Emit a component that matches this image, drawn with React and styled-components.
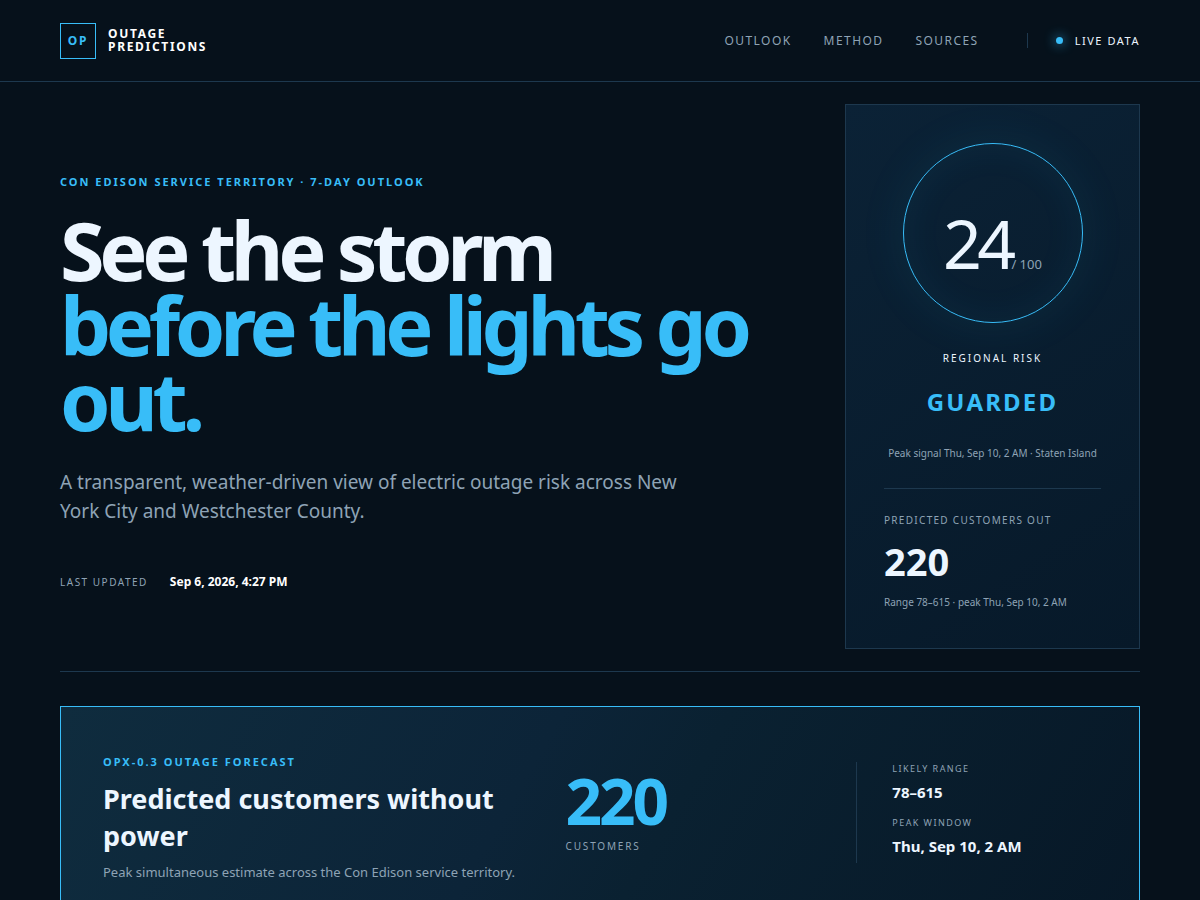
import React from "react";
import styled, { createGlobalStyle, ThemeProvider } from "styled-components";

const theme = {
  ink: "#edf6ff",
  white: "#ffffff",
  accent: "#38bdf8",
  muted: "#8ea3b5",
  line: "#1d384e",
  bg: "#06111b",
};

const GlobalStyle = createGlobalStyle`
  *, *::before, *::after { box-sizing: border-box; }
  body {
    margin: 0;
    background: ${theme.bg};
    color: ${theme.ink};
    font-family: "Noto Sans", "Liberation Sans", sans-serif;
    font-size: 16px;
    line-height: 24px;
  }
  h1, h2, p, dl, dd { margin: 0; }
  a { color: inherit; text-decoration: none; }
`;

const Header = styled.header`
  display: flex;
  align-items: center;
  justify-content: space-between;
  height: 82px;
  padding: 0 60px;
  border-bottom: 1px solid ${({ theme }) => theme.line};
`;

const Brand = styled.a`
  display: flex;
  align-items: center;
  gap: 12px;
  font-size: 12px;
  font-weight: 700;
  line-height: 13px;
  letter-spacing: 0.14em;
`;

const BrandMark = styled.span`
  display: grid;
  place-items: center;
  width: 36px;
  height: 36px;
  border: 1px solid ${({ theme }) => theme.accent};
  color: ${({ theme }) => theme.accent};
`;

const BrandName = styled.span`
  display: grid;
  padding-bottom: 2px;
  color: ${({ theme }) => theme.white};
`;

const Nav = styled.nav`
  display: flex;
  align-items: center;
  gap: 32px;
`;

const NavLink = styled.a`
  color: ${({ theme }) => theme.muted};
  font-size: 12px;
  letter-spacing: 0.12em;
`;

const LiveStatus = styled.span`
  display: flex;
  align-items: center;
  gap: 12px;
  margin-left: 16px;
  padding-left: 28px;
  border-left: 1px solid ${({ theme }) => theme.line};
  color: ${({ theme }) => theme.ink};
  font-size: 11px;
  line-height: 15px;
  letter-spacing: 0.14em;
`;

const LiveDot = styled.i`
  width: 7px;
  height: 7px;
  border-radius: 50%;
  background: ${({ theme }) => theme.accent};
  box-shadow: 0 0 12px ${({ theme }) => theme.accent};
`;

const Main = styled.main`
  padding: 0 60px 60px;
`;

const Hero = styled.section`
  display: grid;
  grid-template-columns: minmax(0, 1fr) 295px;
  gap: 80px;
  align-items: center;
  padding: 22px 0;
  border-bottom: 1px solid ${({ theme }) => theme.line};
`;

const HeroCopy = styled.div`
  padding-top: 15px;
`;

const Eyebrow = styled.p`
  color: ${({ theme }) => theme.accent};
  font-size: 11px;
  font-weight: 700;
  line-height: 16px;
  letter-spacing: 2px;
`;

const Headline = styled.h1`
  margin-top: 22px;
  font-size: 81px;
  font-weight: 700;
  line-height: 75px;
  letter-spacing: -0.066em;
`;

const HeadlineAccent = styled.span`
  display: block;
  color: ${({ theme }) => theme.accent};
`;

const Lede = styled.p`
  max-width: 640px;
  margin-top: 31px;
  color: ${({ theme }) => theme.muted};
  font-size: 19px;
  line-height: 29px;
`;

const Updated = styled.p`
  display: flex;
  align-items: center;
  gap: 22px;
  margin-top: 44px;
`;

const Label = styled.span`
  color: ${({ theme, $bright }) => ($bright ? theme.ink : theme.muted)};
  font-size: 10px;
  line-height: 14px;
  letter-spacing: ${({ $tracking = "0.15em" }) => $tracking};
`;

const UpdatedTime = styled.time`
  color: ${({ theme }) => theme.white};
  font-size: 12px;
  font-weight: 700;
`;

const RiskPanel = styled.aside`
  display: flex;
  flex-direction: column;
  align-items: center;
  padding: 38px;
  border: 1px solid ${({ theme }) => theme.line};
  background: linear-gradient(145deg, #0b2236, #071929);
`;

const RiskRing = styled.div`
  display: flex;
  align-items: baseline;
  justify-content: center;
  width: 180px;
  height: 180px;
  padding-top: 61px;
  border: 1px solid ${({ theme }) => theme.accent};
  border-radius: 50%;
  box-shadow:
    0 0 50px rgba(56, 189, 248, 0.08),
    inset 0 0 40px rgba(56, 189, 248, 0.06);
`;

const RiskScore = styled.span`
  font-size: 68px;
  line-height: 75px;
  letter-spacing: -0.07em;
`;

const RiskScale = styled.span`
  color: ${({ theme }) => theme.muted};
  font-size: 13px;
`;

const RiskLabel = styled(Label)`
  margin-top: 28px;
`;

const RiskLevel = styled.strong`
  margin-top: 20px;
  color: ${({ theme }) => theme.accent};
  font-size: 24px;
  line-height: 34px;
  letter-spacing: 0.09em;
`;

const FinePrint = styled.span`
  color: ${({ theme }) => theme.muted};
  font-size: 10px;
  line-height: 15px;
`;

const PeakSignal = styled(FinePrint)`
  margin-top: 27px;
`;

const PanelForecast = styled.div`
  display: flex;
  flex-direction: column;
  align-self: stretch;
  margin-top: 27px;
  padding-top: 24px;
  border-top: 1px solid ${({ theme }) => theme.line};
`;

const PanelCount = styled.strong`
  margin: 13px 0;
  font-size: 38px;
  line-height: 42px;
`;

const Forecast = styled.section`
  display: grid;
  grid-template-columns: minmax(0, 12fr) minmax(0, 7fr) minmax(0, 7fr);
  gap: 50px;
  align-items: center;
  margin-top: 34px;
  padding: 36px 42px;
  border: 1px solid ${({ theme }) => theme.accent};
  background: linear-gradient(120deg, #0f2c3e, #0c2438 42%, #0a2131 56%, #071827);
`;

const ForecastIntro = styled.div`
  padding-top: 11px;
`;

const ForecastTitle = styled.h2`
  margin-top: 10px;
  font-size: 27px;
  font-weight: 700;
  line-height: 37px;
`;

const ForecastNote = styled.p`
  margin-top: 8px;
  color: ${({ theme }) => theme.muted};
  font-size: 13px;
  line-height: 20px;
`;

const ForecastCount = styled.div`
  display: flex;
  flex-direction: column;
  gap: 6px;
  padding-bottom: 4px;
`;

const CountValue = styled.strong`
  color: ${({ theme }) => theme.accent};
  font-size: 64px;
  line-height: 64px;
  letter-spacing: -0.05em;
`;

const Facts = styled.dl`
  display: grid;
  gap: 14px;
  padding: 0 0 7px 35px;
  border-left: 1px solid ${({ theme }) => theme.line};
`;

const FactTerm = styled.dt`
  color: ${({ theme }) => theme.muted};
  font-size: 9px;
  line-height: 14px;
  letter-spacing: 0.16em;
`;

const FactValue = styled.dd`
  margin-top: 6px;
  font-size: 15px;
  font-weight: 700;
  line-height: 20px;
`;

const facts = [
  { term: "LIKELY RANGE", value: "78–615" },
  { term: "PEAK WINDOW", value: "Thu, Sep 10, 2 AM" },
];

export default function App() {
  return (
    <ThemeProvider theme={theme}>
      <GlobalStyle />
      <Header>
        <Brand href="#top">
          <BrandMark>OP</BrandMark>
          <BrandName>
            <span>OUTAGE</span>
            <span>PREDICTIONS</span>
          </BrandName>
        </Brand>
        <Nav>
          <NavLink href="#outlook">OUTLOOK</NavLink>
          <NavLink href="#method">METHOD</NavLink>
          <NavLink href="#sources">SOURCES</NavLink>
          <LiveStatus>
            <LiveDot />
            LIVE DATA
          </LiveStatus>
        </Nav>
      </Header>
      <Main>
        <Hero>
          <HeroCopy>
            <Eyebrow>CON EDISON SERVICE TERRITORY · 7-DAY OUTLOOK</Eyebrow>
            <Headline>
              See the storm
              <HeadlineAccent>before the lights go out.</HeadlineAccent>
            </Headline>
            <Lede>
              A transparent, weather-driven view of electric outage risk across New York City and
              Westchester County.
            </Lede>
            <Updated>
              <Label>LAST UPDATED</Label>
              <UpdatedTime dateTime="2026-09-06T16:27">Sep 6, 2026, 4:27 PM</UpdatedTime>
            </Updated>
          </HeroCopy>
          <RiskPanel>
            <RiskRing>
              <RiskScore>24</RiskScore>
              <RiskScale>/ 100</RiskScale>
            </RiskRing>
            <RiskLabel $bright $tracking="0.2em">
              REGIONAL RISK
            </RiskLabel>
            <RiskLevel>GUARDED</RiskLevel>
            <PeakSignal>Peak signal Thu, Sep 10, 2 AM · Staten Island</PeakSignal>
            <PanelForecast>
              <Label $tracking="0.13em">PREDICTED CUSTOMERS OUT</Label>
              <PanelCount>220</PanelCount>
              <FinePrint>Range 78–615 · peak Thu, Sep 10, 2 AM</FinePrint>
            </PanelForecast>
          </RiskPanel>
        </Hero>
        <Forecast>
          <ForecastIntro>
            <Eyebrow>OPX-0.3 OUTAGE FORECAST</Eyebrow>
            <ForecastTitle>Predicted customers without power</ForecastTitle>
            <ForecastNote>
              Peak simultaneous estimate across the Con Edison service territory.
            </ForecastNote>
          </ForecastIntro>
          <ForecastCount>
            <CountValue>220</CountValue>
            <Label $tracking="0.18em">CUSTOMERS</Label>
          </ForecastCount>
          <Facts>
            {facts.map(({ term, value }) => (
              <div key={term}>
                <FactTerm>{term}</FactTerm>
                <FactValue>{value}</FactValue>
              </div>
            ))}
          </Facts>
        </Forecast>
      </Main>
    </ThemeProvider>
  );
}
